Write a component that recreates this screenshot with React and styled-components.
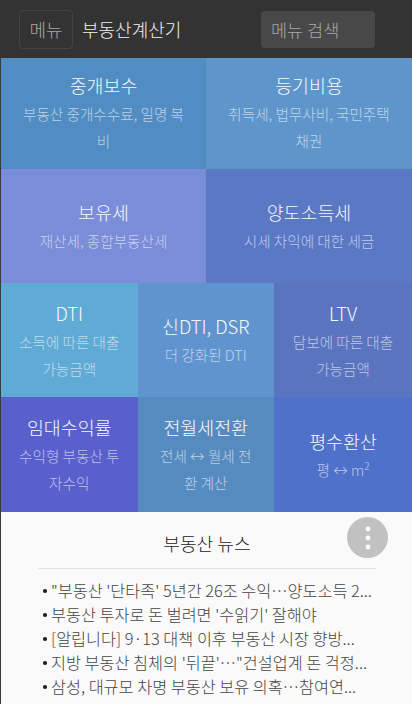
import React from "react";
import styled, { createGlobalStyle } from "styled-components";

const Global = createGlobalStyle`
  html, body { margin: 0; padding: 0; background: #333; }
  body { font-family: "Noto Sans CJK KR", "Noto Sans", sans-serif; font-weight: 300; }
  * { box-sizing: border-box; }
`;

const Page = styled.div`
  width: 412px;
  height: 704px;
  overflow: hidden;
  position: relative;
  padding-left: 1px;
  background: #3a3a3a;
`;

const Header = styled.header`
  height: 58px;
  margin-left: -1px;
  background: #333333;
  display: flex;
  align-items: center;
  padding: 0 37px 0 19px;
`;

const MenuButton = styled.div`
  width: 54px;
  height: 39px;
  border: 1px solid #444;
  border-radius: 4px;
  color: #a8a8a8;
  font-size: 18px;
  display: flex;
  align-items: center;
  justify-content: center;
`;

const Brand = styled.div`
  margin-left: 9px;
  color: #f0f0f0;
  font-size: 18px;
  flex: 1;
`;

const Search = styled.div`
  width: 114px;
  height: 37px;
  border-radius: 4px;
  background: #484848;
  color: #a8a8a8;
  font-size: 17.5px;
  font-weight: 300;
  padding-left: 10px;
  display: flex;
  align-items: center;
`;

const Row = styled.div`
  display: grid;
  grid-template-columns: ${(p) => p.$cols};
  height: ${(p) => p.$h}px;
`;

const Tile = styled.div`
  background: ${(p) => p.$bg};
  display: flex;
  flex-direction: column;
  align-items: center;
  justify-content: center;
  text-align: center;
  padding: 0 ${(p) => p.$pad}px ${(p) => p.$bottom || 0}px;
  color: #fff;
`;

const TileTitle = styled.div`
  font-size: 18.4px;
  line-height: 28px;
  color: #f6f8fd;
`;

const TileSub = styled.div`
  font-size: 14.6px;
  line-height: 27px;
  margin-top: 1px;
  color: rgba(255, 255, 255, 0.6);
`;

const News = styled.section`
  height: 192px;
  background: #fafafa;
  position: relative;
  padding: 14px 36px 0 37px;
`;

const NewsTitle = styled.h2`
  margin: 0;
  height: 43px;
  border-bottom: 1px solid #e2e2e2;
  font-size: 18.2px;
  font-weight: 300;
  color: #222;
  line-height: 34px;
  text-align: center;
`;

const NewsList = styled.ul`
  list-style: none;
  margin: 9px 0 0;
  padding: 0 0 0 5px;
`;

const NewsItem = styled.li`
  font-size: 16.3px;
  line-height: 24px;
  color: #444;
  white-space: nowrap;
  padding-left: 8px;
  position: relative;
  &::before {
    content: "";
    position: absolute;
    left: 0;
    top: 11px;
    width: 3.5px;
    height: 3.5px;
    border-radius: 50%;
    background: #222;
  }
`;

const Fab = styled.div`
  position: absolute;
  right: 24px;
  top: 5px;
  width: 41px;
  height: 41px;
  border-radius: 50%;
  background: #c1c1c1;
  display: flex;
  align-items: center;
  justify-content: center;
`;

const Square = styled.sup`
  font-size: 10px;
  line-height: 0;
`;

const row1 = [
  { t: "중개보수", s: "부동산 중개수수료, 일명 복비", bg: "#518dc2" },
  { t: "등기비용", s: "취득세, 법무사비, 국민주택채권", bg: "#5e96cb" },
];
const row2 = [
  { t: "보유세", s: "재산세, 종합부동산세", bg: "#7b8dd8" },
  { t: "양도소득세", s: "시세 차익에 대한 세금", bg: "#5b78c5" },
];
const row3 = [
  { t: "DTI", s: "소득에 따른 대출 가능금액", bg: "#5fabd5" },
  { t: "신DTI, DSR", s: "더 강화된 DTI", bg: "#6094ce" },
  { t: "LTV", s: "담보에 따른 대출 가능금액", bg: "#5b74bf" },
];
const row4 = [
  { t: "임대수익률", s: "수익형 부동산 투자수익", bg: "#5a60cb" },
  { t: "전월세전환", s: "전세 ↔ 월세 전환 계산", bg: "#568bc0" },
  { t: "평수환산", s: <>평 ↔ m<Square>2</Square></>, bg: "#4f71ca" },
];
const news = [
  "\"부동산 '단타족' 5년간 26조 수익…양도소득 2...",
  "부동산 투자로 돈 벌려면 '수읽기' 잘해야",
  "[알립니다] 9·13 대책 이후 부동산 시장 향방...",
  "지방 부동산 침체의 '뒤끝'…\"건설업계 돈 걱정...",
  "삼성, 대규모 차명 부동산 보유 의혹…참여연...",
];

const TileRow = ({ items, h, cols, pad, bottom }) => (
  <Row $cols={cols} $h={h}>
    {items.map((i) => (
      <Tile key={i.t} $bg={i.bg} $pad={pad} $bottom={bottom}>
        <TileTitle>{i.t}</TileTitle>
        <TileSub>{i.s}</TileSub>
      </Tile>
    ))}
  </Row>
);

export default function App() {
  return (
    <Page>
      <Global />
      <Header>
        <MenuButton>메뉴</MenuButton>
        <Brand>부동산계산기</Brand>
        <Search>메뉴 검색</Search>
      </Header>
      <TileRow items={row1} h={111} cols="205px 206px" pad={19} bottom={2} />
      <TileRow items={row2} h={114} cols="205px 206px" pad={19} />
      <TileRow items={row3} h={114} cols="136.5px 136.5px 138px" pad={17} />
      <TileRow items={row4} h={115} cols="136.5px 136.5px 138px" pad={17} />
      <News>
        <NewsTitle>부동산 뉴스</NewsTitle>
        <NewsList>
          {news.map((n) => (
            <NewsItem key={n}>{n}</NewsItem>
          ))}
        </NewsList>
        <Fab>
          <svg width="6" height="26" viewBox="0 0 6 26">
            <circle cx="3" cy="4" r="2.4" fill="#fff" />
            <circle cx="3" cy="13" r="2.4" fill="#fff" />
            <circle cx="3" cy="22" r="2.4" fill="#fff" />
          </svg>
        </Fab>
      </News>
    </Page>
  );
}
